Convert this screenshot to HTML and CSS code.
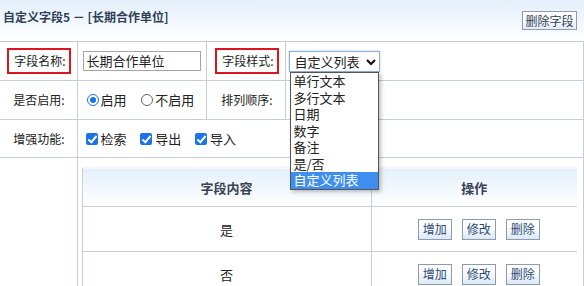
FILE: index.html
```html
<!DOCTYPE html>
<html lang="zh-CN">
  <head>
    <meta charset="UTF-8" />
    <title>自定义字段</title>
    <link rel="stylesheet" href="styles.css">
  </head>
  <body>
    <!-- Title bar -->
    <div class="topbar">
      <div class="title">自定义字段5 － [长期合作单位]</div>
      <button class="btn">删除字段</button>
    </div>

    <table class="form">
      <colgroup>
        <col class="w1" />
        <col class="w2" />
        <col class="w3" />
        <col />
      </colgroup>
      <tr class="row-h">
        <td class="label"><span class="mark">字段名称:</span></td>
        <td class="field"><div class="input">长期合作单位</div></td>
        <td class="label"><span class="mark">字段样式:</span></td>
        <td class="field select-cell">
          <div class="select">
            自定义列表
            <svg class="chev" width="10" height="8" viewBox="0 0 10 8"><path d="M1 2 L5 6 L9 2" fill="none" stroke="#111" stroke-width="2.2"/></svg>
          </div>
          <ul class="options">
            <li>单行文本</li>
            <li>多行文本</li>
            <li>日期</li>
            <li>数字</li>
            <li>备注</li>
            <li>是/否</li>
            <li class="on">自定义列表</li>
          </ul>
        </td>
      </tr>
      <tr class="row-h">
        <td class="label">是否启用:</td>
        <td class="field">
          <label class="opt"><span class="radio checked"></span>启用</label>
          <label class="opt"><span class="radio"></span>不启用</label>
        </td>
        <td class="label">排列顺序:</td>
        <td class="field"></td>
      </tr>
      <tr class="row-s">
        <td class="label">增强功能:</td>
        <td class="field" colspan="3">
          <label class="opt"><span class="check"></span>检索</label>
          <label class="opt"><span class="check"></span>导出</label>
          <label class="opt"><span class="check"></span>导入</label>
        </td>
      </tr>
      <tr>
        <td class="label"></td>
        <td class="list-cell" colspan="3">
          <table class="items">
            <tr>
              <th class="c1">字段内容</th>
              <th>操作</th>
            </tr>
            <tr>
              <td class="c1">是</td>
              <td class="ops"><button class="sbtn">增加</button><button class="sbtn">修改</button><button class="sbtn">删除</button></td>
            </tr>
            <tr>
              <td class="c1">否</td>
              <td class="ops"><button class="sbtn">增加</button><button class="sbtn">修改</button><button class="sbtn">删除</button></td>
            </tr>
          </table>
        </td>
      </tr>
    </table>
  </body>
</html>
```

FILE: styles.css
```css
body {
  margin: 0;
  background: #fff;
  font-family: "Noto Sans CJK SC", sans-serif;
  font-size: 12px;
  color: #222;
  overflow: hidden;
}

.topbar {
  height: 42px;
  box-sizing: border-box;
  display: flex;
  justify-content: space-between;
  align-items: flex-start;
  padding: 8px 7px 0 3px;
  background: linear-gradient(#e3eefa, #ffffff);
  border-bottom: 1px solid #c8c8c8;
}

.title {
  font-weight: bold;
  color: #2f3f55;
  line-height: 18px;
}

.btn {
  margin-top: 3px;
  height: 19px;
  width: 55px;
  padding: 0;
  font-family: inherit;
  font-size: 12px;
  line-height: 16px;
  color: #2c3e55;
  background: linear-gradient(#ffffff 40%, #e2ecf6);
  border: 1px solid #8d9bb0;
}

.form {
  width: 100%;
  border-collapse: collapse;
  table-layout: fixed;
}

.w1 {
  width: 77px;
}

.w2 {
  width: 129px;
}

.w3 {
  width: 79px;
}

.form > tbody > tr > td {
  border: 1px solid #c8ccd4;
  border-top: none;
  padding: 0;
  white-space: nowrap;
}

.form > tbody > tr > td:first-child {
  border-left: none;
}

.row-h > td {
  height: 38px;
}

.row-s > td {
  height: 37px;
}

.label {
  text-align: right;
  padding-right: 12px !important;
  line-height: 18px;
}

.mark {
  display: inline-block;
  border: 2px solid #e0141e;
  padding: 2px 3px 2px 5px;
  margin-right: -6px;
}

.field {
  padding-left: 5px !important;
}

.input {
  height: 18px;
  border: 1px solid #a5a5a5;
  font-size: 13px;
  line-height: 18px;
  padding-left: 3px;
  width: 113px;
}

.select-cell {
  position: relative;
  padding-left: 3px !important;
}

.select {
  width: 84px;
  height: 19px;
  border: 1px solid #8fb0d4;
  box-shadow: 0 0 2px #a9c7ea;
  font-size: 13px;
  line-height: 19px;
  padding-left: 5px;
  position: relative;
}

.chev {
  position: absolute;
  right: 3px;
  top: 6px;
}

.options {
  position: absolute;
  left: 4px;
  top: 30px;
  width: 87px;
  margin: 0;
  padding: 0;
  list-style: none;
  background: #fff;
  border: 1px solid #555;
  box-shadow: 2px 2px 4px rgba(0, 0, 0, 0.25);
  z-index: 5;
  font-size: 13px;
}

.options li {
  height: 16.5px;
  line-height: 16.5px;
  padding-left: 3px;
}

.options li.on {
  background: #3e8ef0;
  color: #fff;
}

.opt {
  display: inline-flex;
  align-items: center;
  margin-right: 8px;
  font-size: 13px;
  line-height: 18px;
}

.radio {
  width: 10px;
  height: 10px;
  border: 1px solid #666;
  border-radius: 50%;
  margin: 0 2px 0 4px;
  position: relative;
}

.radio.checked {
  border-color: #1a73e8;
}

.radio.checked::after {
  content: "";
  position: absolute;
  left: 2px;
  top: 2px;
  width: 6px;
  height: 6px;
  border-radius: 50%;
  background: #1a73e8;
}

.check {
  width: 12px;
  height: 12px;
  border-radius: 2px;
  background: #1a73e8;
  margin: 0 3px 0 3px;
  position: relative;
}

.check::after {
  content: "";
  position: absolute;
  left: 4px;
  top: 1px;
  width: 3px;
  height: 7px;
  border: solid #fff;
  border-width: 0 2px 2px 0;
  transform: rotate(40deg);
}

.list-cell {
  padding: 9px 6px 0 4px !important;
  vertical-align: top;
  height: 120px;
}

.items {
  width: 100%;
  border-collapse: collapse;
  border-left: 1px solid #c8ccd4;
}

.items th {
  height: 36px;
  font-size: 13px;
  color: #3a4354;
  background: linear-gradient(#e4f0fc, #ffffff);
  border-bottom: 1px solid #c8ccd4;
  border-top: 1px solid #f0f4f8;
}

.items td {
  height: 42px;
  text-align: center;
  font-size: 13px;
  border-bottom: 1px solid #c8ccd4;
}

.items .c1 {
  width: 286px;
  border-right: 1px solid #c8ccd4;
}

.ops {
  font-size: 0;
  padding-left: 10px;
}

.sbtn {
  width: 34px;
  height: 21px;
  padding: 0;
  margin: 0 5px;
  font-family: inherit;
  font-size: 12px;
  line-height: 18px;
  color: #2c4a78;
  background: linear-gradient(#ffffff 35%, #dbe8f5);
  border: 1px solid #8d9bb0;
}
```
